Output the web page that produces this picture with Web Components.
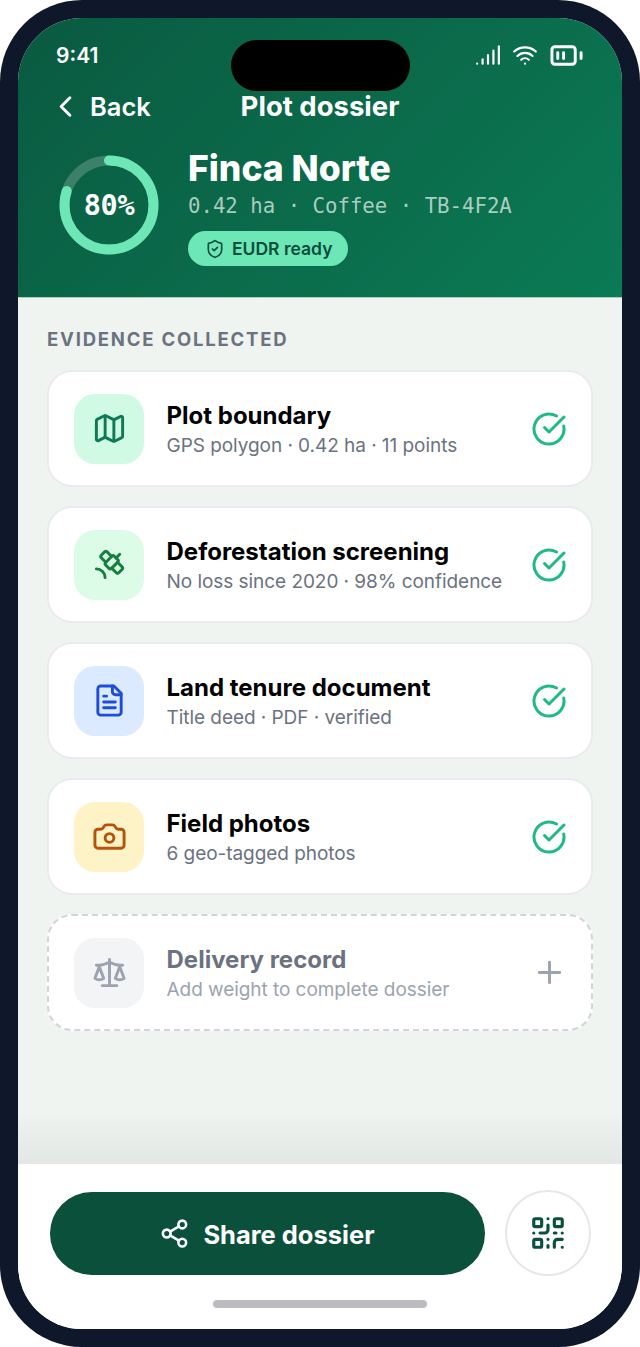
<!DOCTYPE html>
<html lang="en"><head><meta charset="utf-8"><title>Plot dossier</title>
<style>
html,body{margin:0;padding:0;background:#fff;}
body{width:640px;height:1347px;overflow:hidden;font-family:Inter,"Liberation Sans",sans-serif;}
</style></head><body>
<phone-frame>
  <dossier-header slot="header"></dossier-header>
  <section-label>EVIDENCE COLLECTED</section-label>
  <evidence-card tone="#d1fae5" color="#0b7a55" icon="map" title="Plot boundary" sub="GPS polygon · 0.42 ha · 11 points"></evidence-card>
  <evidence-card tone="#dcfce7" color="#15803d" icon="sat" title="Deforestation screening" sub="No loss since 2020 · 98% confidence"></evidence-card>
  <evidence-card tone="#dbeafe" color="#1d4ed8" icon="doc" title="Land tenure document" sub="Title deed · PDF · verified"></evidence-card>
  <evidence-card tone="#fef3c7" color="#b45309" icon="cam" title="Field photos" sub="6 geo-tagged photos"></evidence-card>
  <evidence-card pending tone="#f3f4f6" color="#9ca3af" icon="scale" title="Delivery record" sub="Add weight to complete dossier"></evidence-card>
  <dossier-footer slot="footer"></dossier-footer>
</phone-frame>
<script>
const ICONS={
 map:'<path d="M14.106 5.553a2 2 0 0 0 1.788 0l3.659-1.83A1 1 0 0 1 21 4.619v12.764a1 1 0 0 1-.553.894l-4.553 2.277a2 2 0 0 1-1.788 0l-4.212-2.106a2 2 0 0 0-1.788 0l-3.659 1.830A1 1 0 0 1 3 19.381V6.618a1 1 0 0 1 .553-.894l4.553-2.277a2 2 0 0 1 1.788 0z"/><path d="M15 5.764v15M9 3.236v15"/>',
 sat:'<path d="m13.5 6.5-3.148-3.148a1.205 1.205 0 0 0-1.704 0L6.352 5.648a1.205 1.205 0 0 0 0 1.704L9.5 10.5"/><path d="M16.5 7.500 19 5"/><path d="m17.5 10.5 3.148 3.148a1.205 1.205 0 0 1 0 1.704l-2.296 2.296a1.205 1.205 0 0 1-1.704 0L13.5 14.5"/><path d="M9 21a6 6 0 0 0-6-6"/><path d="M9.352 10.648a1.205 1.205 0 0 0 0 1.704l2.296 2.296a1.205 1.205 0 0 0 1.704 0l4.296-4.296a1.205 1.205 0 0 0 0-1.704l-2.296-2.296a1.205 1.205 0 0 0-1.704 0z"/>',
 doc:'<path d="M15 2H6a2 2 0 0 0-2 2v16a2 2 0 0 0 2 2h12a2 2 0 0 0 2-2V7Z"/><path d="M14 2v4a2 2 0 0 0 2 2h4"/><path d="M10 9H8M16 13H8M16 17H8"/>',
 cam:'<path d="M13.997 4a2 2 0 0 1 1.76 1.05l.486.9A2 2 0 0 0 18.003 7H20a2 2 0 0 1 2 2v9a2 2 0 0 1-2 2H4a2 2 0 0 1-2-2V9a2 2 0 0 1 2-2h1.997a2 2 0 0 0 1.759-1.048l.489-.904A2 2 0 0 1 10.004 4z"/><circle cx="12" cy="13" r="3"/>',
 scale:'<path d="m16 16 3-8 3 8c-.87.65-1.92 1-3 1s-2.13-.35-3-1Z"/><path d="m2 16 3-8 3 8c-.87.65-1.92 1-3 1s-2.13-.35-3-1Z"/><path d="M7 21h10M12 3v18M3 7h2c2 0 5-1 7-2 2 1 5 2 7 2h2"/>'
};
const S='fill="none" stroke-width="2" stroke-linecap="round" stroke-linejoin="round" viewBox="0 0 24 24"';
const define=(n,c)=>customElements.define(n,c);
const mount=(el,html)=>{el.attachShadow({mode:'open'}).innerHTML=html;};

define('phone-frame',class extends HTMLElement{constructor(){super();mount(this,`<style>
:host{display:block;width:640px;height:1347px;box-sizing:border-box;background:#0f172a;border-radius:82px;padding:18px;}
.screen{position:relative;height:100%;border-radius:64px;overflow:hidden;background:#eff4f0;display:flex;flex-direction:column;}
.body{flex:1;padding:30px 29px 0;display:flex;flex-direction:column;gap:19px;}
.notch{position:absolute;left:213px;top:22px;width:179px;height:51px;border-radius:26px;background:#000;}
</style><div class="screen"><slot name="header"></slot><div class="body"><slot></slot></div><slot name="footer"></slot><div class="notch"></div></div>`);}});

define('status-bar',class extends HTMLElement{constructor(){super();mount(this,`<style>
:host{display:flex;justify-content:space-between;align-items:center;height:26px;padding:0 38px;color:#fff;font:600 21px Inter,sans-serif;}
svg{display:block}.r{display:flex;align-items:center;gap:11px}
</style><span>9:41</span><div class="r">
<svg width="26" height="26" ${S} stroke="#fff"><path d="M2 20h.01M7 20v-4M12 20v-8M17 20V8M22 4v16"/></svg>
<svg width="26" height="26" ${S} stroke="#fff"><path d="M12 20h.01M2 8.820a15 15 0 0 1 20 0M5 12.859a10 10 0 0 1 14 0M8.500 16.429a5 5 0 0 1 7 0"/></svg>
<svg width="35" height="35" ${S} stroke="#fff" style="margin:-5px 0"><rect x="2" y="6" width="16" height="12" rx="2"/><path d="M6 14v-4M10 14v-4M22 14v-4"/></svg>
</div>`);}});

define('progress-ring',class extends HTMLElement{constructor(){super();const r=44.500,c=2*Math.PI*r;mount(this,`<style>
:host{display:block;position:relative;width:100px;height:100px;flex:none}
svg{display:block}
span{position:absolute;inset:0;display:flex;align-items:center;justify-content:center;color:#fff;font:700 28.500px "DejaVu Sans Mono",monospace;letter-spacing:-.300px}
</style><svg width="100" height="100" viewBox="0 0 100 100" fill="none"><circle cx="50" cy="50" r="${r}" stroke="rgba(255,255,255,.2)" stroke-width="10"/><circle cx="50" cy="50" r="${r}" stroke="#6ee7b7" stroke-width="10" stroke-linecap="round" stroke-dasharray="${c*.8} ${c}" transform="rotate(-90 50 50)"/></svg><span>80%</span>`);}});

define('dossier-header',class extends HTMLElement{constructor(){super();mount(this,`<style>
:host{display:block;height:280px;box-sizing:border-box;background:linear-gradient(135deg,#0a5a40 0%,#0b7a55 100%);padding-top:24px;color:#fff;border-bottom:1px solid #a9cdbf;}
.nav{position:relative;height:34px;margin-top:21px;display:flex;align-items:center;justify-content:center;font:700 27.500px Inter,sans-serif;}
.back{position:absolute;left:30px;top:0;height:34px;display:flex;align-items:center;gap:7px;font:600 25.500px Inter,sans-serif}
svg{display:block}
.hero{display:flex;gap:29px;padding:32px 0 0 41px;align-items:flex-start}
.col{margin-top:-6px}
h1{margin:0;font:800 35.500px/40px Inter,sans-serif}
.sub{font:20.700px/30px "DejaVu Sans Mono",monospace;color:rgba(255,255,255,.66);margin:2px 0 10px;white-space:nowrap}
.badge{display:inline-flex;align-items:center;gap:7px;height:35px;box-sizing:border-box;padding:0 16px 0 17px;border-radius:18px;background:#6ee7b7;color:#064e3b;font:600 17.500px Inter,sans-serif}
</style><status-bar></status-bar>
<div class="nav"><div class="back"><svg width="35" height="35" ${S} stroke="#fff"><path d="m15 18-6-6 6-6"/></svg><span>Back</span></div><span>Plot dossier</span></div>
<div class="hero"><progress-ring></progress-ring><div class="col"><h1>Finca Norte</h1><div class="sub">0.42 ha · Coffee · TB-4F2A</div><span class="badge"><svg width="20" height="20" ${S} stroke="#064e3b"><path d="M20 13c0 5-3.500 7.500-7.660 8.950a1 1 0 0 1-.67-.01C7.500 20.500 4 18 4 13V6a1 1 0 0 1 1-1c2 0 4.500-1.200 6.240-2.720a1.170 1.170 0 0 1 1.520 0C14.510 3.810 17 5 19 5a1 1 0 0 1 1 1z"/><path d="m9 12 2 2 4-4"/></svg>EUDR ready</span></div></div>`);}});

define('section-label',class extends HTMLElement{constructor(){super();mount(this,`<style>
:host{display:block;height:23px;color:#6b7280;font:700 18.500px/23px Inter,sans-serif;letter-spacing:1.800px}
</style><slot></slot>`);}});

define('evidence-card',class extends HTMLElement{constructor(){super();
 const a=n=>this.getAttribute(n);const pending=this.hasAttribute('pending');
 mount(this,`<style>
:host{display:flex;align-items:center;height:117px;box-sizing:border-box;border-radius:25px;background:#fff;border:2px ${pending?'dashed #d1d5db':'solid #e9ebef'};padding:0 24px 0 25px;gap:22.500px}
.ic{width:70px;height:70px;flex:none;border-radius:21px;background:${a('tone')};display:flex;align-items:center;justify-content:center}
.t{flex:1;min-width:0;padding-top:5px}
.h{font:700 24px/30px Inter,sans-serif;color:${pending?'#6b7280':'#000'};white-space:nowrap}
.s{font:400 19px/30px Inter,sans-serif;color:${pending?'#9ca3af':'#6b7280'};white-space:nowrap;letter-spacing:-.050px}
svg{display:block;flex:none}
</style><div class="ic"><svg width="35" height="35" ${S} stroke="${a('color')}">${ICONS[a('icon')]}</svg></div>
<div class="t"><div class="h">${a('title')}</div><div class="s">${a('sub')}</div></div>
${pending?`<svg width="35" height="35" ${S} stroke="#9ca3af"><path d="M5 12h14M12 5v14"/></svg>`:`<svg width="36" height="36" ${S} stroke="#1fbb83"><path d="M21.801 10A10 10 0 1 1 17 3.335"/><path d="m9 11 3 3L22 4"/></svg>`}`);}});

define('dossier-footer',class extends HTMLElement{constructor(){super();mount(this,`<style>
:host{display:block;position:relative;height:165px;box-sizing:border-box;background:#fff;padding:26px 31.500px 0;}
:host::before{content:"";position:absolute;left:0;right:0;top:-55px;height:55px;background:linear-gradient(to bottom,rgba(0,0,0,0),rgba(0,0,0,.05))}
.row{display:flex;align-items:center;gap:20px}
.btn{width:435px;height:83px;flex:none;box-sizing:border-box;padding-top:2px;border-radius:42px;background:#0a503b;color:#fff;font:700 25.500px Inter,sans-serif;display:flex;align-items:center;justify-content:center;gap:13px}
.qr{width:86px;height:86px;flex:none;box-sizing:border-box;border-radius:50%;border:2px solid #e5e7eb;background:#fff;display:flex;align-items:center;justify-content:center}
.bar{width:214px;height:8px;border-radius:4px;background:#bbbbc0;margin:24px auto 0}
svg{display:block}
</style><div class="row"><div class="btn"><svg width="31" height="31" ${S} stroke="#fff" style="margin-top:-2px"><circle cx="18" cy="5" r="3"/><circle cx="6" cy="12" r="3"/><circle cx="18" cy="19" r="3"/><path d="m8.590 13.510 6.830 3.980M15.410 6.510l-6.820 3.980"/></svg><span>Share dossier</span></div>
<div class="qr"><svg width="38" height="38" ${S} stroke="#0a503b"><rect width="5" height="5" x="3" y="3" rx="1"/><rect width="5" height="5" x="16" y="3" rx="1"/><rect width="5" height="5" x="3" y="16" rx="1"/><path d="M21 16h-3a2 2 0 0 0-2 2v3M21 21v.01M12 7v3a2 2 0 0 1-2 2H7M3 12h.01M12 3h.01M12 16v.01M16 12h1M21 12v.01M12 21v-1"/></svg></div></div><div class="bar"></div>`);}});
</script></body></html>
